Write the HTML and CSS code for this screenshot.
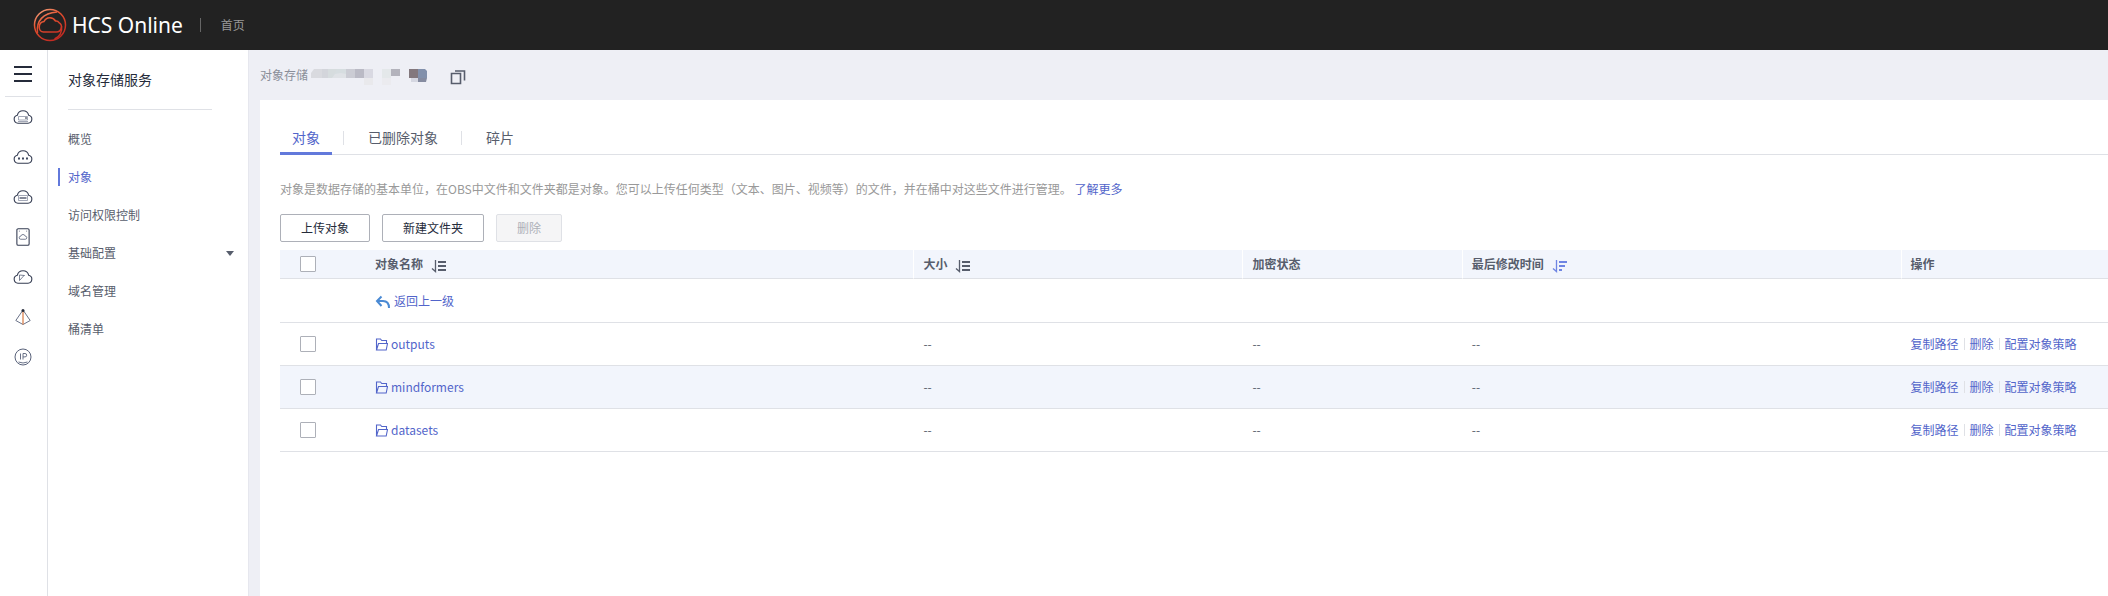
FILE: index.html
```html
<!DOCTYPE html>
<html lang="zh-CN">
<head>
<meta charset="utf-8">
<title>HCS Online</title>
<link rel="stylesheet" href="styles.css">
</head>
<body>
<svg class="defs" aria-hidden="true">
  <symbol id="sort" viewBox="0 0 16 14"><path d="M4.500 1v11.500L1 9.500" fill="none" stroke="currentColor" stroke-width="1.300"/><path d="M7 2h8v2H7zM7 6h8v2H7zM7 10h8v2H7z" fill="currentColor"/></symbol>
  <symbol id="sort-desc" viewBox="0 0 16 14"><path d="M4.500 1v11.500L1 9.500" fill="none" stroke="currentColor" stroke-width="1.300"/><path d="M7 2h8v2H7zM7 6h6v2H7zM7 10h3v2H7z" fill="currentColor"/></symbol>
  <symbol id="folder" viewBox="0 0 13 13"><path d="M1.500 12V1h4l1.200 1.500h4.800v2.500M1.500 12l2-6.500h9l-1.300 6.500z" fill="none" stroke="currentColor" stroke-width="1.100"/></symbol>
  <symbol id="cloud" viewBox="0 0 20 16"><path d="M5 14.200A4 4 0 0 1 4.300 6.300C5 3.500 7.300 1.800 10 1.800s5 1.700 5.700 4.500A4 4 0 0 1 15 14.200z" fill="none" stroke="currentColor" stroke-width="1.100"/></symbol>
</svg>
<header class="topbar">
  <a class="brand" href="#">
    <svg class="logo" viewBox="0 0 34 34" fill="none" stroke="url(#lg)" stroke-width="1.500">
      <defs><linearGradient id="lg" gradientUnits="userSpaceOnUse" x1="4" y1="2" x2="22" y2="32"><stop offset="0" stop-color="#f7a882"/><stop offset=".4" stop-color="#e4502f"/><stop offset="1" stop-color="#c22a22"/></linearGradient></defs>
      <circle cx="17" cy="17" r="15.500"/>
      <path d="M10.500 24h13a5 5 0 0 0 2.500-9.300 3.500 3.500 0 0 0-3.500-1.700 6.500 6.500 0 0 0-11.500 0.500C4.500 14.500 5 24 10.500 24z"/>
      <path d="M4.500 25C3 13 10 5 24 4M28.500 18.500c1 5.500-2 10.500-7 12.500"/>
    </svg>
    <span>HCS Online</span>
  </a>
  <a class="home" href="#">首页</a>
</header>
<div class="shell">
  <nav class="rail" aria-label="服务">
    <button class="menu" aria-label="菜单"><i></i><i></i><i></i></button>
    <a href="#" aria-label="云服务器"><svg viewBox="0 0 20 16"><use href="#cloud"/><path d="M5.500 7.500h9v3.500h-9zM5 12.500h10" fill="none" stroke="#8b92a5" stroke-width=".8"/><path d="M12 9h2" stroke="#252b3a"/></svg></a>
    <a href="#" aria-label="弹性伸缩"><svg viewBox="0 0 20 16"><use href="#cloud"/><path d="M5 8.500h2v2H5zM9 8.500h2v2H9zM13 8.500h2v2h-2z" fill="#414a60"/></svg></a>
    <a href="#" aria-label="裸金属服务器"><svg viewBox="0 0 20 16"><use href="#cloud"/><path d="M5.500 6.500h9v5h-9z" fill="none" stroke="#8b92a5" stroke-width=".8"/><path d="M6.500 9h7" stroke="#414a60" stroke-width="1.300"/></svg></a>
    <a href="#" aria-label="云硬盘"><svg class="tall" viewBox="0 0 16 20" fill="none" stroke="currentColor"><rect x="1.200" y=".8" width="13.600" height="18.400" rx="1.500" stroke-width="1.200"/><path d="M5.500 12.500a1.700 1.700 0 0 1 0-3.400 2.600 2.600 0 0 1 5 0 1.700 1.700 0 0 1 0 3.400zM3.500 3.500h1M11.500 3.500h1" stroke="#59627a" stroke-width=".9"/></svg></a>
    <a href="#" aria-label="云备份"><svg viewBox="0 0 20 16"><use href="#cloud"/><path d="M6.500 11.500V6l5 .5M6.500 11.500L11.500 6" fill="none" stroke="#59627a" stroke-width=".8"/></svg></a>
    <a href="#" aria-label="虚拟私有云"><svg class="tall" viewBox="0 0 16 18" fill="none" stroke="#59627a" stroke-width=".9"><path d="M8 2L.8 12.500 8 16.500l7.200-4z"/><path d="M8 2v14.500" stroke="#d9814f" stroke-width="1.300"/><circle cx="8" cy="2.500" r="1.500" fill="#252b3a" stroke="none"/></svg></a>
    <a href="#" aria-label="弹性IP"><svg class="tall" viewBox="0 0 18 18" fill="none" stroke="#59627a"><circle cx="9" cy="9" r="8"/><path d="M6.500 5.500v6M9 11.500v-6h2a1.700 1.700 0 0 1 0 3.400H9M4.500 14q4.500 2 9 0" stroke-width=".9"/></svg></a>
  </nav>
  <nav class="side" aria-label="对象存储服务">
    <h1>对象存储服务</h1>
    <ul>
      <li><a href="#">概览</a></li>
      <li><a class="active" href="#">对象</a></li>
      <li><a href="#">访问权限控制</a></li>
      <li><a class="more" href="#">基础配置</a></li>
      <li><a href="#">域名管理</a></li>
      <li><a href="#">桶清单</a></li>
    </ul>
  </nav>
  <main>
    <div class="crumb">
      <span>对象存储</span>
      <svg class="mosaic" viewBox="-2 -3 122 20" aria-hidden="true">
        <path d="M4 1h14v9H1V5z" fill="#d9dadf"/><path d="M12 1h6v9h-6z" fill="#d3d5db"/><path d="M18 1h9v9h-9z" fill="#d6dcde"/><path d="M27 1h9v9H22z" fill="#d6dde0"/><path d="M36 1h9v9h-9z" fill="#cbccd4"/><path d="M45 1h9v9h-9z" fill="#babac5"/><path d="M54 1h9v9h-9z" fill="#d9d9e2"/><path d="M22 10l3-4 6-1 5 1v4z" fill="#dfe2e6"/><path d="M54 10h9v9h-9z" fill="#e9e9ec"/><path d="M72 1h9v9h-9z" fill="#e4e8ea"/><path d="M81 1h9v7h-9z" fill="#b3b3bc"/><path d="M72 10h9v9h-9z" fill="#ebebef"/><path d="M99 1h9v9h-9z" fill="#83787d"/><path d="M108 1h7l2 2v7h-9z" fill="#8290ab"/><path d="M101 10h7v4h-7z" fill="#d5d7e1"/><path d="M108 10h9l-1 4h-8z" fill="#858ba0"/>
      </svg>
      <button class="copy" aria-label="复制"><svg viewBox="0 0 16 16" fill="none" stroke="#575d6c" stroke-width="1.600"><path d="M1.500 4.500h9v10h-9zM5 2h9.500v9.500"/></svg></button>
    </div>
    <section class="card">
      <nav class="tabs"><a class="active" href="#">对象</a><a href="#">已删除对象</a><a href="#">碎片</a></nav>
      <p class="intro">对象是数据存储的基本单位，在OBS中文件和文件夹都是对象。您可以上传任何类型（文本、图片、视频等）的文件，并在桶中对这些文件进行管理。 <a href="#">了解更多</a></p>
      <div class="buttons"><button>上传对象</button><button>新建文件夹</button><button disabled>删除</button></div>
      <table>
        <colgroup><col class="c-check"><col class="c-name"><col class="c-size"><col class="c-enc"><col class="c-time"><col></colgroup>
        <thead><tr>
          <th><input type="checkbox" aria-label="全选"></th>
          <th>对象名称<button class="sort" aria-label="排序"><svg viewBox="0 0 16 14"><use href="#sort"/></svg></button></th>
          <th>大小<button class="sort" aria-label="排序"><svg viewBox="0 0 16 14"><use href="#sort"/></svg></button></th>
          <th>加密状态</th>
          <th>最后修改时间<button class="sort on" aria-label="排序"><svg viewBox="0 0 16 14"><use href="#sort-desc"/></svg></button></th>
          <th>操作</th>
        </tr></thead>
        <tbody>
          <tr class="up"><td></td><td colspan="5"><a class="back" href="#"><svg viewBox="0 0 16 14" fill="none" stroke="#4a8ad4" stroke-width="2"><path d="M6.500 1.500L2 6l4.500 5M2 6h6c4 0 6 2.500 6 7"/></svg>返回上一级</a></td></tr>
          <tr><td><input type="checkbox" aria-label="outputs"></td><td><a class="file" href="#"><svg viewBox="0 0 13 13"><use href="#folder"/></svg>outputs</a></td><td>--</td><td>--</td><td>--</td><td><div class="ops"><a href="#">复制路径</a><a href="#">删除</a><a href="#">配置对象策略</a></div></td></tr>
          <tr class="hover"><td><input type="checkbox" aria-label="mindformers"></td><td><a class="file" href="#"><svg viewBox="0 0 13 13"><use href="#folder"/></svg>mindformers</a></td><td>--</td><td>--</td><td>--</td><td><div class="ops"><a href="#">复制路径</a><a href="#">删除</a><a href="#">配置对象策略</a></div></td></tr>
          <tr><td><input type="checkbox" aria-label="datasets"></td><td><a class="file" href="#"><svg viewBox="0 0 13 13"><use href="#folder"/></svg>datasets</a></td><td>--</td><td>--</td><td>--</td><td><div class="ops"><a href="#">复制路径</a><a href="#">删除</a><a href="#">配置对象策略</a></div></td></tr>
        </tbody>
      </table>
    </section>
  </main>
</div>
</body>
</html>
```
FILE: styles.css
```css
* { box-sizing: border-box; }
body {
  margin: 0;
  min-height: 100vh;
  display: flex;
  flex-direction: column;
  font: 12px/18px "Noto Sans CJK SC", sans-serif;
  color: #575d6c;
  background: #fff;
}
a { color: #5265ca; text-decoration: none; }
button { font: inherit; color: inherit; background: none; border: 0; padding: 0; }
svg { display: block; flex: none; }
.defs { position: absolute; width: 0; height: 0; }

.topbar { display: flex; align-items: center; height: 50px; padding-left: 33px; background: #222; }
.brand { display: flex; align-items: center; gap: 5px; color: #fff; font: 21px/28px "Noto Sans", sans-serif; }
.logo { width: 34px; height: 34px; }
.home { display: flex; align-items: center; margin-left: 17px; color: #999; }
.home::before { content: ""; width: 1px; height: 14px; margin-right: 20px; background: #666; }

.shell { flex: 1; display: flex; }
.rail { width: 48px; padding-right: 1px; border-right: 1px solid #dfe1e6; display: flex; flex-direction: column; align-items: center; color: #343c52; }
.menu { width: 36px; height: 47px; border-bottom: 1px solid #dfe1e6; display: flex; flex-direction: column; align-items: center; justify-content: center; gap: 5px; padding-top: 2px; }
.menu i { width: 18px; height: 2px; background: #252b3a; }
.rail a { height: 40px; display: flex; align-items: center; color: #343c52; }
.rail a svg { width: 20px; height: 16px; }
.rail a .tall { width: 18px; height: 18px; }

.side { width: 201px; padding: 19px 0; border-right: 1px solid #e6e7ee; }
.side h1 { margin: 0 36px 10px 20px; padding-bottom: 20px; border-bottom: 1px solid #dfe1e6; font-size: 14px; line-height: 20px; font-weight: 400; color: #252b3a; }
.side ul { list-style: none; margin: 0; padding: 0; }
.side a { display: flex; align-items: center; height: 38px; color: #575d6c; }
.side a::before { content: ""; width: 2px; height: 18px; margin: 0 8px 0 10px; }
.side a.active { color: #5265ca; }
.side a.active::before { background: #6279db; }
.side .more::after { content: ""; margin-left: auto; margin-right: 14px; border: 4px solid transparent; border-top: 5px solid #575d6c; border-bottom: 0; }

main { flex: 1; display: flex; flex-direction: column; padding-left: 11px; background: #eeeff5; }
.crumb { display: flex; align-items: center; height: 50px; color: #8a8e99; }
.mosaic { width: 122px; height: 20px; }
.copy { margin-left: 20px; padding-top: 3px; }
.copy svg { width: 16px; height: 16px; }
.card { flex: 1; padding: 24px 0 0 20px; background: #fff; }

.tabs { display: flex; gap: 24px; border-bottom: 1px solid #dfe1e6; font-size: 14px; }
.tabs a { position: relative; padding: 3px 12px 5px; line-height: 20px; border-bottom: 3px solid transparent; margin-bottom: -1px; color: #575d6c; }
.tabs a.active { color: #5265ca; border-color: #6279db; }
.tabs a + a::before { content: ""; position: absolute; left: -13px; top: 7px; width: 1px; height: 14px; background: #dfe1e6; }
.intro { margin: 25px 0 16px; color: #999; }
.buttons { display: flex; gap: 12px; margin-bottom: 8px; }
.buttons button { height: 28px; padding: 0 20px; border: 1px solid #adb0b8; border-radius: 2px; color: #252b3a; background: #fff; }
.buttons button:disabled { color: #adb0b8; border-color: #dfe1e6; background: #f5f5f6; }

table { width: 100%; table-layout: fixed; border-collapse: separate; border-spacing: 0; }
.c-check { width: 85px; }
.c-name { width: 30%; }
.c-size { width: 18%; }
.c-enc { width: 12%; }
.c-time { width: 24%; }
th, td { height: 43px; padding: 0 0 0 10px; text-align: left; vertical-align: middle; border-bottom: 1px solid #dfe1e6; }
th { height: 29px; background: #f2f5fc; font-weight: 700; }
th:nth-child(n+3) { padding-left: 9px; border-left: 1px solid #fff; }
th:first-child, td:first-child { padding-left: 20px; }
.up td { height: 44px; }
.hover td { background: #f2f5fc; }
input { appearance: none; display: block; width: 16px; height: 16px; margin: 0; border: 1px solid #adb0b8; border-radius: 1px; background: #fff; }
.sort { display: inline-block; margin-left: 8px; vertical-align: middle; }
.sort svg { width: 16px; height: 14px; }
.sort.on { color: #6f85e3; }
.file, .back { display: flex; align-items: center; gap: 3px; }
.file svg { width: 13px; height: 13px; }
.back svg { width: 16px; height: 14px; margin-top: 3px; }
.ops { display: flex; align-items: center; }
.ops a + a { display: flex; align-items: center; }
.ops a + a::before { content: ""; width: 1px; height: 12px; margin: 0 5px; background: #dfe1e6; }
```
